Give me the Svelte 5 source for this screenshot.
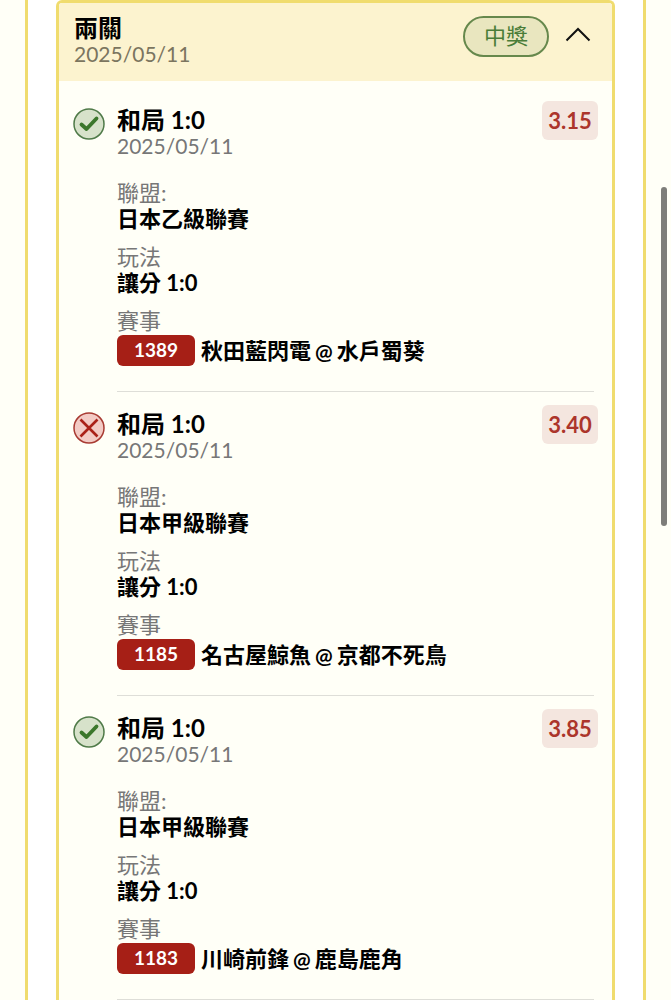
<script lang="ts">
  type Leg = {
    won: boolean;
    pick: string;
    date: string;
    odds: string;
    league: string;
    play: string;
    matchId: string;
    away: string;
    home: string;
  };

  const legs: Leg[] = [
    {
      won: true,
      pick: "和局 1:0",
      date: "2025/05/11",
      odds: "3.15",
      league: "日本乙級聯賽",
      play: "讓分 1:0",
      matchId: "1389",
      away: "秋田藍閃電",
      home: "水戶蜀葵",
    },
    {
      won: false,
      pick: "和局 1:0",
      date: "2025/05/11",
      odds: "3.40",
      league: "日本甲級聯賽",
      play: "讓分 1:0",
      matchId: "1185",
      away: "名古屋鯨魚",
      home: "京都不死鳥",
    },
    {
      won: true,
      pick: "和局 1:0",
      date: "2025/05/11",
      odds: "3.85",
      league: "日本甲級聯賽",
      play: "讓分 1:0",
      matchId: "1183",
      away: "川崎前鋒",
      home: "鹿島鹿角",
    },
  ];

  let open = $state(true);
</script>

<main class="page">
  <div class="panel">
    <section class="ticket">
      <header class="ticket-header">
        <div class="heading">
          <h1>兩關</h1>
          <p class="date">2025/05/11</p>
        </div>
        <span class="status">中獎</span>
        <button
          type="button"
          class="toggle"
          class:closed={!open}
          aria-label="展開或收合"
          aria-expanded={open}
          onclick={() => (open = !open)}
        >
          <svg width="26" height="16" viewBox="0 0 26 16">
            <path d="M1.5 13.5 L13 2 L24.5 13.5" />
          </svg>
        </button>
      </header>

      {#if open}
        <div class="legs">
          {#each legs as leg (leg.matchId)}
            <article class="leg">
              {#if leg.won}
                <svg class="mark won" width="32" height="32" viewBox="0 0 32 32">
                  <circle cx="16" cy="16" r="15" />
                  <path d="M8.5 16.5 L13.5 21 L23.5 10.5" />
                </svg>
              {:else}
                <svg class="mark lost" width="32" height="32" viewBox="0 0 32 32">
                  <circle cx="16" cy="16" r="15" />
                  <path d="M7.5 7.5 L24.5 24.5 M24.5 7.5 L7.5 24.5" />
                </svg>
              {/if}

              <div class="leg-body">
                <div class="leg-top">
                  <div class="heading">
                    <h2>{leg.pick}</h2>
                    <p class="date">{leg.date}</p>
                  </div>
                  <span class="odds">{leg.odds}</span>
                </div>

                <dl>
                  <div>
                    <dt>聯盟:</dt>
                    <dd>{leg.league}</dd>
                  </div>
                  <div>
                    <dt>玩法</dt>
                    <dd>{leg.play}</dd>
                  </div>
                  <div>
                    <dt>賽事</dt>
                    <dd class="match">
                      <span class="match-id">{leg.matchId}</span>
                      <span class="teams">
                        <span>{leg.away}</span>
                        <span class="at">@</span>
                        <span>{leg.home}</span>
                      </span>
                    </dd>
                  </div>
                </dl>
              </div>
            </article>
          {/each}
        </div>
      {/if}
    </section>
  </div>
  <div class="scroll-thumb"></div>
</main>

<style>
  :global(body) {
    margin: 0;
    background: #fffff7;
  }

  .page {
    min-height: 100vh;
    padding: 0 25px;
    box-sizing: border-box;
    display: flex;
    font-family: Lato, "Noto Sans CJK TC", sans-serif;
    font-size: 22px;
    line-height: 26px;
    color: #000;
  }

  .panel {
    flex: 1;
    display: flex;
    padding: 0 28px;
    background: #fff;
    border: solid #f0dc6e;
    border-width: 0 3px;
  }

  .ticket {
    flex: 1;
    background: #fffff7;
    border: 3px solid #f0dc6e;
    border-bottom: 0;
    border-radius: 6px 6px 0 0;
  }

  .ticket-header {
    display: flex;
    align-items: flex-start;
    padding: 12px 21px 14px 15px;
    background: #fcf3cf;
    border-radius: 3px 3px 0 0;
  }

  .heading {
    flex: 1;
  }

  h1,
  h2,
  p,
  dl,
  dd {
    margin: 0;
  }

  h1,
  h2 {
    font-size: 24px;
    line-height: 26px;
    font-weight: 700;
  }

  .date {
    font-size: 21px;
    color: #777;
  }

  .ticket-header .date {
    color: #7b755f;
  }

  .status {
    box-sizing: border-box;
    width: 86px;
    margin-top: 1px;
    padding: 5px 0 6px;
    text-align: center;
    color: #4a7d38;
    background: #e9e6bf;
    border: 2px solid #66884c;
    border-radius: 21px;
  }

  .toggle {
    display: flex;
    margin: 12px 0 0 16px;
    padding: 0;
    background: none;
    border: 0;
    cursor: pointer;
  }

  .toggle.closed svg {
    transform: rotate(180deg);
  }

  .toggle path {
    fill: none;
    stroke: #111;
    stroke-width: 2;
  }

  .legs {
    padding: 7px 14px 0;
  }

  .leg {
    display: flex;
    gap: 12px;
  }

  .mark {
    flex: none;
    margin-top: 20px;
  }

  .mark path {
    fill: none;
  }

  .won circle {
    fill: #d7e2ca;
    stroke: #4f7a48;
    stroke-width: 1.5;
  }

  .won path {
    stroke: #3b772b;
    stroke-width: 3.8;
    stroke-linecap: round;
    stroke-linejoin: round;
  }

  .lost circle {
    fill: #f3cbc5;
    stroke: #a83a32;
    stroke-width: 1.5;
  }

  .lost path {
    stroke: #aa2118;
    stroke-width: 2.6;
  }

  .leg-body {
    flex: 1;
    margin-right: 4px;
    padding: 19px 0 25px;
    border-bottom: 1px solid #deded8;
  }

  .leg-top {
    display: flex;
    align-items: flex-start;
  }

  .odds {
    box-sizing: border-box;
    width: 56px;
    margin: -6px -4px 0 0;
    padding: 7px 0 6px;
    text-align: center;
    font-weight: 700;
    color: #ac352b;
    background: #f4e6df;
    border-radius: 6px;
  }

  dl {
    display: flex;
    flex-direction: column;
    gap: 12px;
    margin-top: 21px;
  }

  dt {
    color: #777;
  }

  dd {
    font-weight: 700;
  }

  .match {
    display: flex;
    align-items: center;
    gap: 6px;
    margin-top: 1px;
  }

  .match-id {
    width: 78px;
    padding: 2px 0 3px;
    text-align: center;
    font-size: 19px;
    color: #fff;
    background: #a61f16;
    border-radius: 6px;
  }

  .teams {
    display: flex;
    gap: 4px;
  }

  .at {
    font-size: 21px;
  }

  .scroll-thumb {
    position: fixed;
    top: 187px;
    right: 4px;
    width: 6px;
    height: 339px;
    background: #7e7e7a;
    border-radius: 3px;
  }
</style>
